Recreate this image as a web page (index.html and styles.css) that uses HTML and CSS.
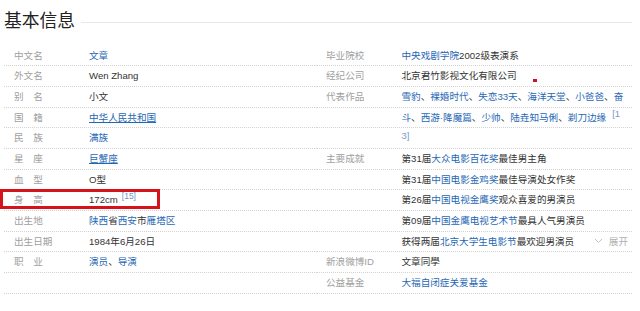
FILE: index.html
```html
<!DOCTYPE html>
<html lang="zh-CN">
<head>
<meta charset="utf-8">
<title>基本信息</title>
<link rel="stylesheet" href="styles.css">
</head>
<body>
<div class="card">
  <div class="title-bar"><h2 class="title">基本信息</h2></div>
  <div class="info">
    <dl class="col col-left">
      <div class="row"><dt class="lbl">中文名</dt><dd class="val"><a class="lk">文章</a></dd></div>
      <div class="row"><dt class="lbl">外文名</dt><dd class="val">Wen Zhang</dd></div>
      <div class="row"><dt class="lbl">别　名</dt><dd class="val">小文</dd></div>
      <div class="row"><dt class="lbl">国　籍</dt><dd class="val"><a class="lk ul">中华人民共和国</a></dd></div>
      <div class="row"><dt class="lbl">民　族</dt><dd class="val"><a class="lk">满族</a></dd></div>
      <div class="row"><dt class="lbl">星　座</dt><dd class="val"><a class="lk ul">巨蟹座</a></dd></div>
      <div class="row"><dt class="lbl">血　型</dt><dd class="val">O型</dd></div>
      <div class="row row-mark"><dt class="lbl">身　高</dt><dd class="val">172cm<sup class="ref">[15]</sup></dd></div>
      <div class="row"><dt class="lbl">出生地</dt><dd class="val"><a class="lk">陕西</a>省<a class="lk">西安</a>市<a class="lk">雁塔区</a></dd></div>
      <div class="row"><dt class="lbl">出生日期</dt><dd class="val">1984年6月26日</dd></div>
      <div class="row"><dt class="lbl">职　业</dt><dd class="val"><a class="lk">演员</a>、<a class="lk">导演</a></dd></div>
    </dl>
    <dl class="col col-right">
      <div class="row"><dt class="lbl">毕业院校</dt><dd class="val"><a class="lk">中央戏剧学院</a>2002级表演系</dd></div>
      <div class="row"><dt class="lbl">经纪公司</dt><dd class="val">北京君竹影视文化有限公司</dd><span class="dot"></span></div>
      <div class="row"><dt class="lbl">代表作品</dt><dd class="val"><a class="lk">雪豹</a>、<a class="lk">裸婚时代</a>、<a class="lk">失恋33天</a>、<a class="lk">海洋天堂</a>、<a class="lk">小爸爸</a>、<a class="lk">奋</a></dd></div>
      <div class="row"><dt class="lbl"></dt><dd class="val"><a class="lk">斗</a>、<a class="lk">西游·降魔篇</a>、<a class="lk">少帅</a>、<a class="lk">陆垚知马俐</a>、<a class="lk">剃刀边缘</a><sup class="ref ref-wide">[1</sup></dd></div>
      <div class="row"><dt class="lbl"></dt><dd class="val"><sup class="ref ref-cont">3]</sup></dd></div>
      <div class="row"><dt class="lbl">主要成就</dt><dd class="val">第31届<a class="lk">大众电影百花奖</a>最佳男主角</dd></div>
      <div class="row"><dt class="lbl"></dt><dd class="val">第31届<a class="lk">中国电影金鸡奖</a>最佳导演处女作奖</dd></div>
      <div class="row"><dt class="lbl"></dt><dd class="val">第26届<a class="lk">中国电视金鹰奖</a>观众喜爱的男演员</dd></div>
      <div class="row"><dt class="lbl"></dt><dd class="val">第09届<a class="lk">中国金鹰电视艺术节</a>最具人气男演员</dd></div>
      <div class="row"><dt class="lbl"></dt><dd class="val dd-more"><span>获得两届<a class="lk">北京大学生电影节</a>最欢迎男演员</span><span class="more"><svg class="chev" width="9" height="6" viewBox="0 0 9 6"><polyline points="1,1 4.5,4.5 8,1" fill="none" stroke="#c4c4c4" stroke-width="1"/></svg>展开</span></dd></div>
      <div class="row"><dt class="lbl">新浪微博ID</dt><dd class="val">文章同學</dd></div>
      <div class="row"><dt class="lbl">公益基金</dt><dd class="val"><a class="lk">大福自闭症关爱基金</a></dd></div>
    </dl>
  </div>
</div>
</body>
</html>
```

FILE: styles.css
```css
body {
  margin: 0;
  background: #fff;
  font-family: "Liberation Sans", "Noto Sans CJK SC", sans-serif;
  font-size: 9.6px;
  color: #333;
}

.card {
  padding: 0 8px 0 4px;
}

.title-bar {
  display: flex;
  align-items: center;
  height: 26px;
  margin-top: 8px;
  margin-bottom: 11.5px;
}

.title {
  margin: 0;
  padding-right: 6px;
  font-size: 17.8px;
  font-weight: normal;
  line-height: 26px;
  color: #222;
}

.title-bar::after {
  content: "";
  flex: 1;
  height: 1px;
  margin-top: 2px;
  background: #e8e8e8;
}

.info {
  display: grid;
  grid-template-columns: 313px 1fr;
}

.col {
  margin: 0;
}

.col-left {
  border-bottom: 1px dotted #d2d2d2;
}

.row {
  position: relative;
  display: flex;
  min-height: 19.67px;
  line-height: 19.67px;
  border-bottom: 1px dotted #d2d2d2;
}

.row .lbl {
  flex: none;
  width: 75px;
  padding-left: 10px;
  color: #a0a0a0;
}

.col-right .row .lbl {
  width: 75.5px;
  padding-left: 9px;
}

.val {
  margin: 0;
  flex: 1;
  white-space: nowrap;
  color: #333;
}

.lk {
  color: #1f68b4;
  text-decoration: none;
}

.ul {
  text-decoration: underline;
  text-underline-offset: 1px;
}

.ref {
  font-size: 8.5px;
  line-height: 1;
  color: #6f93c4;
  vertical-align: 4px;
  margin-left: 4px;
}

.ref-wide {
  font-size: 9.5px;
  margin-left: 6px;
  color: #7d9cc6;
}

.ref-cont {
  font-size: 9.5px;
  margin-left: 0;
  vertical-align: 2px;
  color: #7d9cc6;
}

.dd-more {
  display: flex;
  align-items: center;
}

.more {
  margin-left: auto;
  margin-right: 4px;
  display: flex;
  align-items: center;
  color: #b0b0b0;
}

.chev {
  margin-right: 6px;
}

/* red annotation frame drawn over the 身高 row */
.row-mark::after {
  content: "";
  position: absolute;
  left: -4px;
  top: -1px;
  width: 160px;
  height: 20px;
  box-sizing: border-box;
  border: 3px solid #d6131b;
}

/* small red marker over the company row */
.dot {
  position: absolute;
  left: 216px;
  top: 13px;
  width: 4px;
  height: 3px;
  background: #c8142a;
}
```
